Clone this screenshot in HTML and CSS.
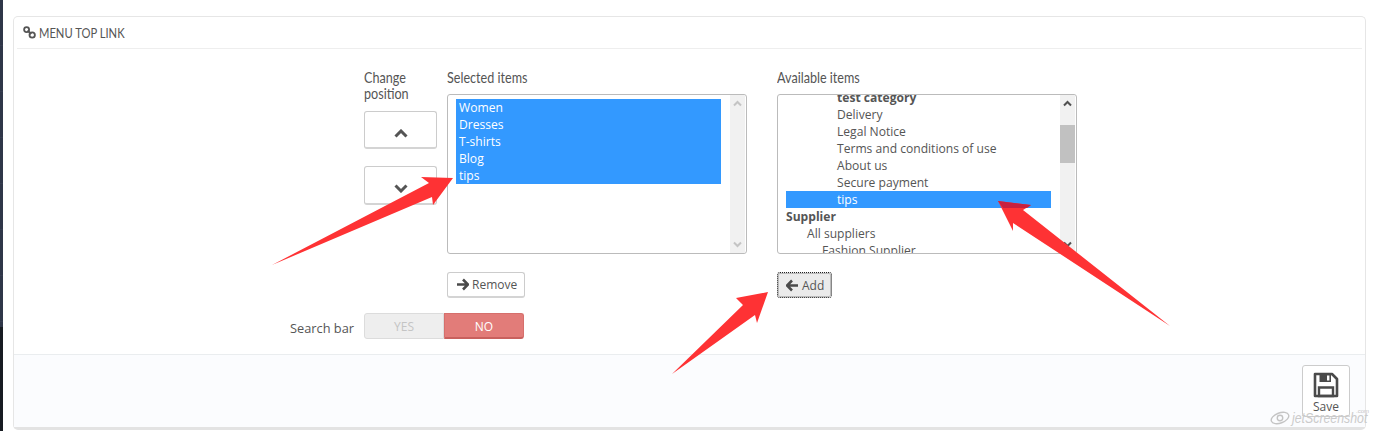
FILE: index.html
```html
<!DOCTYPE html>
<html lang="en">
<head>
<meta charset="utf-8">
<title>Menu top link</title>
<link rel="stylesheet" href="styles.css">
</head>
<body>
<div class="sidebar-edge"><div class="edge-top"></div><div class="edge-bottom"></div></div>
<main class="panel">
  <h3 class="panel-heading">
    <svg class="link-icon" width="13" height="13" viewBox="0 0 13 13"><g fill="none" stroke="#555" stroke-width="1.8"><circle cx="3.6" cy="3.6" r="2.5"/><circle cx="9.2" cy="9" r="2.7"/><path d="M4.6 4.6 8.2 8" stroke-width="2"/></g></svg>
    <span class="heading-text">MENU TOP LINK</span>
  </h3>
  <div class="form-body">
    <div class="picker-row">
      <div class="position-col">
        <div class="col-title"><span class="condensed">Change<br>position</span></div>
        <button class="pos-btn"><svg width="14" height="9" viewBox="0 0 14 9"><path d="M1.5 7.5 7 2l5.5 5.5" fill="none" stroke="#555" stroke-width="3"/></svg></button>
        <button class="pos-btn pos-down"><svg width="14" height="9" viewBox="0 0 14 9"><path d="M1.5 1.5 7 7l5.5-5.5" fill="none" stroke="#555" stroke-width="3"/></svg></button>
      </div>
      <div class="list-col">
        <div class="col-title single"><span class="condensed">Selected items</span></div>
        <div class="listbox">
          <div class="list-area">
            <div class="opt sel">Women</div>
            <div class="opt sel">Dresses</div>
            <div class="opt sel">T-shirts</div>
            <div class="opt sel">Blog</div>
            <div class="opt sel">tips</div>
          </div>
          <div class="scrollbar faded">
            <svg class="sb-arrow" width="15" height="17" viewBox="0 0 15 17"><path d="M4 10.5 7.5 7l3.5 3.5" fill="none" stroke="#c4c4c4" stroke-width="2"/></svg>
            <svg class="sb-arrow" width="15" height="17" viewBox="0 0 15 17"><path d="M4 6.5 7.5 10 11 6.5" fill="none" stroke="#c4c4c4" stroke-width="2"/></svg>
          </div>
        </div>
        <button class="act-btn"><svg width="13" height="13" viewBox="0 0 13 13"><path d="M7 1.5 12 6.5 7 11.5M11 6.5H1" fill="none" stroke="#4a4a4a" stroke-width="2.6"/></svg>Remove</button>
      </div>
      <div class="list-col available">
        <div class="col-title single"><span class="condensed">Available items</span></div>
        <div class="listbox">
          <div class="list-area scrolled">
            <div class="opt bold in-3">test category</div>
            <div class="opt in-3">Delivery</div>
            <div class="opt in-3">Legal Notice</div>
            <div class="opt in-3">Terms and conditions of use</div>
            <div class="opt in-3">About us</div>
            <div class="opt in-3">Secure payment</div>
            <div class="opt sel in-3">tips</div>
            <div class="opt bold">Supplier</div>
            <div class="opt in-1">All suppliers</div>
            <div class="opt in-2">Fashion Supplier</div>
          </div>
          <div class="scrollbar">
            <svg class="sb-arrow" width="15" height="17" viewBox="0 0 15 17"><path d="M4 10.5 7.5 7l3.5 3.5" fill="none" stroke="#505050" stroke-width="2"/></svg>
            <div class="sb-thumb"></div>
            <svg class="sb-arrow sb-end" width="15" height="17" viewBox="0 0 15 17"><path d="M4 6.5 7.5 10 11 6.5" fill="none" stroke="#505050" stroke-width="2"/></svg>
          </div>
        </div>
        <button class="act-btn focused"><svg width="13" height="13" viewBox="0 0 13 13"><path d="M6 1.5 1 6.5 6 11.5M2 6.5H12" fill="none" stroke="#4a4a4a" stroke-width="2.6"/></svg>Add</button>
      </div>
    </div>
    <div class="switch-row">
      <div class="switch-label">Search bar</div>
      <div class="switch">
        <div class="sw-yes">YES</div>
        <div class="sw-no">NO</div>
      </div>
    </div>
  </div>
  <footer class="panel-footer">
    <button class="save-btn">
      <svg width="26" height="26" viewBox="0 0 26 26"><path d="M2 2H19L24 7V24H2Z" fill="none" stroke="#4a4a4a" stroke-width="2.6" stroke-linejoin="round"/><path d="M6.5 2H18V10H6.5Z" fill="#4a4a4a"/><path d="M14 3.5h2.4v5H14Z" fill="#fff"/><path d="M6 15.5H20V24H6Z" fill="none" stroke="#4a4a4a" stroke-width="2.4"/></svg>
      <span>Save</span>
    </button>
  </footer>
</main>
<svg class="arrows" width="1374" height="431" viewBox="0 0 1374 431">
  <g fill="#fe3234">
    <polygon points="272,265 429,183 421,177 453,178 433,205 432,197"/>
    <polygon points="672,374 743,305 736,298 768,292 757,323 755,315"/>
    <polygon points="1170,326 1023,210 1031,205 998,201 1013,231 1013,223"/>
  </g>
  <polygon points="998,201 1031,205 1027,208 1003,208" fill="#c8203f"/>
</svg>
<div class="watermark">
  <svg class="wm-eye" width="22" height="16" viewBox="0 0 24 16"><g fill="none" stroke="#c4c4c4" stroke-width="1.5"><ellipse cx="12" cy="8" rx="10" ry="5.5" transform="rotate(-20 12 8)"/><circle cx="12" cy="8" r="3"/></g></svg>
  <span class="wm-text">jetScreenshot</span>
  <span class="wm-com">.com</span>
</div>
</body>
</html>
```
FILE: styles.css
```css
* { box-sizing: border-box; }
html, body { margin: 0; padding: 0; }
body {
  width: 1374px;
  height: 431px;
  overflow: hidden;
  background: #fff;
  display: flex;
  font-family: "Open Sans", "Liberation Sans", sans-serif;
  font-size: 12px;
  color: #555;
  position: relative;
}
.sidebar-edge { width: 3px; height: 431px; display: flex; flex-direction: column; }
.edge-top {
  height: 327px;
  background: repeating-linear-gradient(#2f3648 0, #2f3648 45px, #3d4457 46px);
}
.edge-bottom { flex: 1; background: #171b22; }
.panel {
  width: 1353px;
  height: 414px;
  margin: 16px 0 0 10px;
  border: 1px solid #e6e6e6;
  border-bottom: 3px solid #e3e3e3;
  border-radius: 5px;
  display: flex;
  flex-direction: column;
}
.panel-heading {
  margin: 0 3px;
  height: 32px;
  padding: 0 0 0 6px;
  border-bottom: 1px solid #eeeeee;
  display: flex;
  align-items: center;
  gap: 3px;
  font-family: "Lato", "Liberation Sans", sans-serif;
  font-weight: 400;
  font-size: 13.5px;
  color: #555;
}
.heading-text { display: inline-block; transform: scaleX(0.83); transform-origin: left center; white-space: nowrap; }
.form-body { flex: 1; padding: 20px 0 0 350px; display: flex; flex-direction: column; }
.picker-row { display: flex; height: 244px; }
.position-col { width: 73px; margin-right: 10px; display: flex; flex-direction: column; }
.col-title {
  font-family: "Lato", "Liberation Sans", sans-serif;
  font-size: 15px;
  line-height: 16px;
  color: #555;
}
.col-title.single { height: 25px; }
.condensed { display: inline-block; transform: scaleX(0.84); transform-origin: left center; white-space: nowrap; }
.pos-btn {
  margin-top: 10px;
  width: 73px;
  height: 38px;
  background: #fff;
  border: 1px solid #ccc;
  border-bottom: 2px solid #d4d4d4;
  border-radius: 3px;
  display: flex;
  align-items: center;
  justify-content: center;
  padding: 7px 0 0;
}
.pos-btn.pos-down { margin-top: 17px; height: 39px; }
.list-col { width: 300px; display: flex; flex-direction: column; }
.list-col.available { margin-left: 30px; }
.listbox {
  width: 300px;
  height: 160px;
  border: 1px solid #bbb;
  border-radius: 3px;
  display: flex;
  overflow: hidden;
  background: #fff;
}
.list-area { flex: 1; padding: 4px 8px 0; overflow: hidden; height: 158px; }
.list-area.scrolled { padding-top: 0; }
.list-area.scrolled .opt:first-child { margin-top: -6px; }
.opt {
  width: 265px;
  height: 17px;
  line-height: 17px;
  font-size: 12.1px;
  color: #555;
  white-space: nowrap;
  padding-left: 3px;
}
.opt.sel { background: #3399ff; color: #fff; }
.opt.bold { font-weight: 700; padding-left: 0; }
.opt.in-1 { padding-left: 21px; }
.opt.in-2 { padding-left: 36px; }
.opt.in-3 { padding-left: 51px; }
.scrollbar {
  width: 15px;
  margin-right: 1px;
  background: #f1f1f1;
  display: flex;
  flex-direction: column;
  justify-content: space-between;
}
.sb-arrow { display: block; flex: none; }
.sb-thumb { height: 38px; margin-top: 13px; background: #c1c1c1; }
.sb-end { margin-top: auto; }
.act-btn {
  margin-top: 18px;
  align-self: flex-start;
  height: 26px;
  padding: 0 7px 0 8px;
  display: flex;
  align-items: center;
  gap: 3px;
  background: #fff;
  border: 1px solid #ccc;
  border-bottom: 2px solid #d4d4d4;
  border-radius: 3px;
  font-family: inherit;
  font-size: 12px;
  color: #555;
}
.act-btn.focused {
  background: #ebebeb;
  border: 1px dotted #222;
  outline: 1px solid #bbb;
  outline-offset: -2px;
}
.switch-row { display: flex; align-items: center; margin-left: -350px; }
.switch-label { width: 340px; text-align: right; font-size: 12.8px; padding-top: 3px; }
.switch { margin-left: 10px; width: 160px; height: 26px; display: flex; text-align: center; line-height: 25px; }
.sw-yes {
  width: 80px;
  background: #eeeeee;
  border: 1px solid #dcdcdc;
  border-radius: 3px 0 0 3px;
  color: #c4c4c4;
}
.sw-no {
  width: 80px;
  background: #e27c79;
  border: 1px solid #d66f6c;
  border-bottom: 2px solid #c9605d;
  border-radius: 0 3px 3px 0;
  color: #fff;
}
.panel-footer {
  height: 73px;
  background: #fbfcfe;
  border-top: 1px solid #eaedef;
  display: flex;
  justify-content: flex-end;
  padding: 10px 15px 0 0;
}
.save-btn {
  width: 48px;
  height: 52px;
  padding: 6px 0 0;
  background: #fff;
  border: 1px solid #ccc;
  border-radius: 3px;
  display: flex;
  flex-direction: column;
  align-items: center;
  gap: 2px;
  font-family: inherit;
  font-size: 12px;
  line-height: 14px;
  color: #555;
}
.arrows { position: absolute; left: 0; top: 0; pointer-events: none; }
.watermark {
  position: absolute;
  left: 1269px;
  top: 409px;
  width: 105px;
  height: 18px;
  display: flex;
  align-items: center;
  gap: 1px;
}
.wm-eye { flex: none; }
.wm-text {
  font-family: "Liberation Sans", sans-serif;
  font-style: italic;
  font-size: 14px;
  color: #cbcbcb;
  white-space: nowrap;
  transform: scaleX(0.88);
  transform-origin: left center;
}
.wm-com {
  position: absolute;
  right: 5px;
  top: -1px;
  font-family: "Liberation Sans", sans-serif;
  font-size: 6px;
  color: #c6c6c6;
}
```
